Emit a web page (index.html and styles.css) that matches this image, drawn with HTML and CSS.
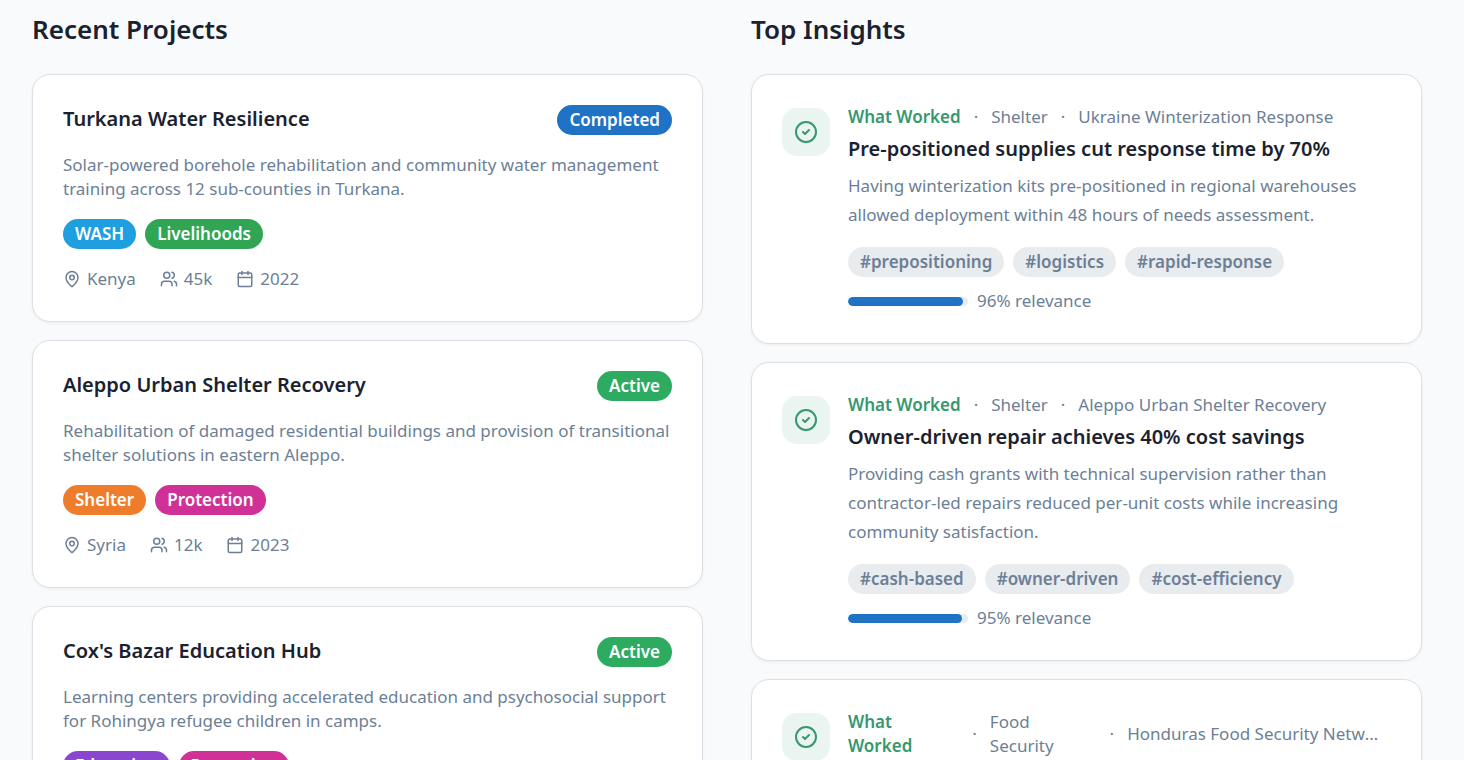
FILE: index.html
```html
<!DOCTYPE html>
<html lang="en">
<head>
    <meta charset="UTF-8">
    <meta name="viewport" content="width=device-width, initial-scale=1">
    <title>Projects and Insights</title>
    <link rel="stylesheet" href="styles.css">
</head>
<body>
<!-- shared icons -->
<svg class="sprite" aria-hidden="true">
    <symbol id="icon-pin" viewBox="0 0 24 24">
        <path d="M20 10c0 4.993-5.539 10.193-7.399 11.799a1 1 0 0 1-1.202 0C9.539 20.193 4 14.993 4 10a8 8 0 0 1 16 0"/>
        <circle cx="12" cy="10" r="3"/>
    </symbol>
    <symbol id="icon-users" viewBox="0 0 24 24">
        <path d="M16 21v-2a4 4 0 0 0-4-4H6a4 4 0 0 0-4 4v2"/>
        <circle cx="9" cy="7" r="4"/>
        <path d="M22 21v-2a4 4 0 0 0-3-3.87"/>
        <path d="M16 3.13a4 4 0 0 1 0 7.75"/>
    </symbol>
    <symbol id="icon-calendar" viewBox="0 0 24 24">
        <path d="M8 2v4"/>
        <path d="M16 2v4"/>
        <rect width="18" height="18" x="3" y="4" rx="2"/>
        <path d="M3 10h18"/>
    </symbol>
    <symbol id="icon-check" viewBox="0 0 24 24">
        <circle cx="12" cy="12" r="10"/>
        <path d="m9 12 2 2 4-4"/>
    </symbol>
</svg>

<main class="dashboard">
    <section class="column">
        <h2>Recent Projects</h2>
        <div class="cards">
            <article class="card">
                <div class="card-header">
                    <h3>Turkana Water Resilience</h3>
                    <span class="badge completed">Completed</span>
                </div>
                <p class="description">Solar-powered borehole rehabilitation and community water management training across 12 sub-counties in Turkana.</p>
                <div class="tags">
                    <span class="badge wash">WASH</span>
                    <span class="badge livelihoods">Livelihoods</span>
                </div>
                <div class="facts">
                    <span><svg><use href="#icon-pin"/></svg>Kenya</span>
                    <span><svg><use href="#icon-users"/></svg>45k</span>
                    <span><svg><use href="#icon-calendar"/></svg>2022</span>
                </div>
            </article>

            <article class="card">
                <div class="card-header">
                    <h3>Aleppo Urban Shelter Recovery</h3>
                    <span class="badge active">Active</span>
                </div>
                <p class="description">Rehabilitation of damaged residential buildings and provision of transitional shelter solutions in eastern Aleppo.</p>
                <div class="tags">
                    <span class="badge shelter">Shelter</span>
                    <span class="badge protection">Protection</span>
                </div>
                <div class="facts">
                    <span><svg><use href="#icon-pin"/></svg>Syria</span>
                    <span><svg><use href="#icon-users"/></svg>12k</span>
                    <span><svg><use href="#icon-calendar"/></svg>2023</span>
                </div>
            </article>

            <article class="card">
                <div class="card-header">
                    <h3>Cox's Bazar Education Hub</h3>
                    <span class="badge active">Active</span>
                </div>
                <p class="description">Learning centers providing accelerated education and psychosocial support for Rohingya refugee children in camps.</p>
                <div class="tags">
                    <span class="badge education">Education</span>
                    <span class="badge protection">Protection</span>
                </div>
            </article>
        </div>
    </section>

    <section class="column">
        <h2>Top Insights</h2>
        <div class="cards">
            <article class="card insight">
                <div class="insight-icon"><svg><use href="#icon-check"/></svg></div>
                <div class="insight-body">
                    <div class="insight-meta">
                        <span class="kind">What Worked</span>
                        <span>·</span>
                        <span>Shelter</span>
                        <span>·</span>
                        <span class="project">Ukraine Winterization Response</span>
                    </div>
                    <h3>Pre-positioned supplies cut response time by 70%</h3>
                    <p class="summary">Having winterization kits pre-positioned in regional warehouses allowed deployment within 48 hours of needs assessment.</p>
                    <div class="tags">
                        <span class="badge">#prepositioning</span>
                        <span class="badge">#logistics</span>
                        <span class="badge">#rapid-response</span>
                    </div>
                    <div class="relevance">
                        <div class="bar"><div class="bar-fill" style="width: 96%"></div></div>
                        <span>96% relevance</span>
                    </div>
                </div>
            </article>

            <article class="card insight">
                <div class="insight-icon"><svg><use href="#icon-check"/></svg></div>
                <div class="insight-body">
                    <div class="insight-meta">
                        <span class="kind">What Worked</span>
                        <span>·</span>
                        <span>Shelter</span>
                        <span>·</span>
                        <span class="project">Aleppo Urban Shelter Recovery</span>
                    </div>
                    <h3>Owner-driven repair achieves 40% cost savings</h3>
                    <p class="summary">Providing cash grants with technical supervision rather than contractor-led repairs reduced per-unit costs while increasing community satisfaction.</p>
                    <div class="tags">
                        <span class="badge">#cash-based</span>
                        <span class="badge">#owner-driven</span>
                        <span class="badge">#cost-efficiency</span>
                    </div>
                    <div class="relevance">
                        <div class="bar"><div class="bar-fill" style="width: 95%"></div></div>
                        <span>95% relevance</span>
                    </div>
                </div>
            </article>

            <article class="card insight">
                <div class="insight-icon"><svg><use href="#icon-check"/></svg></div>
                <div class="insight-body">
                    <div class="insight-meta">
                        <span class="kind">What Worked</span>
                        <span>·</span>
                        <span>Food Security</span>
                        <span>·</span>
                        <span class="project">Honduras Food Security Network</span>
                    </div>
                </div>
            </article>
        </div>
    </section>
</main>
</body>
</html>
```
FILE: styles.css
```css
* {
    box-sizing: border-box;
}

body {
    margin: 0;
    height: 100vh;
    overflow: hidden;
    background: #f9fafc;
    color: #1a2230;
    font-family: "Noto Sans", Roboto, sans-serif;
    font-size: 17px;
    line-height: 24px;
}

h2, h3, p {
    margin: 0;
}

svg {
    flex-shrink: 0;
    width: 18px;
    height: 18px;
    fill: none;
    stroke: currentColor;
    stroke-width: 2;
    stroke-linecap: round;
    stroke-linejoin: round;
}

.sprite {
    display: none;
}

.dashboard {
    display: grid;
    grid-template-columns: 1fr 1fr;
    gap: 48px;
    padding: 12px 42px 0 32px;
}

.column {
    min-width: 0;
}

h2 {
    margin-bottom: 28px;
    font-size: 26px;
    font-weight: 600;
    line-height: 34px;
}

h3 {
    font-size: 20px;
    font-weight: 600;
    line-height: 28px;
}

.cards {
    display: flex;
    flex-direction: column;
    gap: 18px;
}

.card {
    padding: 30px;
    background: #fff;
    border: 1px solid #dcdfe5;
    border-radius: 18px;
    box-shadow: 0 1px 3px rgba(20, 30, 50, 0.06);
}

.card-header {
    display: flex;
    justify-content: space-between;
    align-items: flex-start;
    gap: 12px;
    margin-bottom: 18px;
}

.description,
.summary,
.facts,
.insight-meta,
.relevance {
    color: #6c7f96;
}

.tags {
    display: flex;
    flex-wrap: wrap;
    gap: 9px;
    margin-top: 18px;
}

.badge {
    padding: 3px 12px;
    border-radius: 15px;
    background: #e9ecef;
    color: #6c7f96;
    font-weight: 600;
    white-space: nowrap;
}

.completed, .active, .wash, .livelihoods, .shelter, .protection, .education {
    color: #fff;
}

.completed { background: #2073c4; }
.active { background: #2dab61; }
.wash { background: #1f9fe0; }
.livelihoods { background: #30a655; }
.shelter { background: #ef7c2a; }
.protection { background: #cf3197; }
.education { background: #8a46ce; }

.facts {
    display: flex;
    gap: 24px;
    margin-top: 18px;
}

.facts span {
    display: flex;
    align-items: center;
    gap: 6px;
}

/* insights */
.insight {
    display: flex;
    align-items: flex-start;
    gap: 18px;
}

.insight-icon {
    display: flex;
    flex-shrink: 0;
    align-items: center;
    justify-content: center;
    width: 48px;
    height: 48px;
    margin-top: 3px;
    border-radius: 15px;
    background: #eaf4f1;
    color: #35986f;
}

.insight-icon svg {
    width: 24px;
    height: 24px;
}

.insight-body {
    flex: 1;
    min-width: 0;
}

.insight-meta {
    display: flex;
    align-items: center;
    gap: 13px;
}

.kind {
    color: #35986f;
    font-weight: 600;
}

.project {
    padding-right: 3px;
    overflow: hidden;
    text-overflow: ellipsis;
    white-space: nowrap;
}

.insight h3 {
    margin: 6px 0 8px;
}

.summary {
    line-height: 29px;
}

.relevance {
    display: flex;
    align-items: center;
    gap: 9px;
    margin-top: 12px;
}

.bar {
    width: 120px;
    height: 9px;
    overflow: hidden;
    border-radius: 5px;
    background: #e9ecef;
}

.bar-fill {
    height: 100%;
    border-radius: 5px;
    background: #2073c4;
}
```
